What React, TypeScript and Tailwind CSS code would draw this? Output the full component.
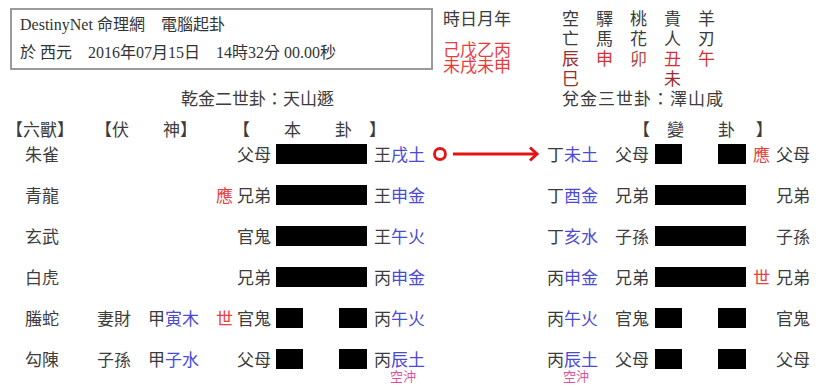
import React from "react";

// 六爻 chart: header box, shensha table, 本卦 / 變卦 rows

type Row = {
  beast: string;
  fuRel?: string;
  fuStem?: string;
  fuBranch?: string;
  mark?: string;
  rel: string;
  yang: boolean;
  stem: string;
  branch: string;
  kong?: boolean;
  moving?: boolean;
  bStem: string;
  bBranch: string;
  bKong?: boolean;
  bRel: string;
  bYang: boolean;
  bMark?: string;
  bRel2: string;
};

const ROWS: Row[] = [
  { beast: "朱雀", rel: "父母", yang: true, stem: "王", branch: "戌土", moving: true, bStem: "丁", bBranch: "未土", bRel: "父母", bYang: false, bMark: "應", bRel2: "父母" },
  { beast: "青龍", mark: "應", rel: "兄弟", yang: true, stem: "王", branch: "申金", bStem: "丁", bBranch: "酉金", bRel: "兄弟", bYang: true, bRel2: "兄弟" },
  { beast: "玄武", rel: "官鬼", yang: true, stem: "王", branch: "午火", bStem: "丁", bBranch: "亥水", bRel: "子孫", bYang: true, bRel2: "子孫" },
  { beast: "白虎", rel: "兄弟", yang: true, stem: "丙", branch: "申金", bStem: "丙", bBranch: "申金", bRel: "兄弟", bYang: true, bMark: "世", bRel2: "兄弟" },
  { beast: "螣蛇", fuRel: "妻財", fuStem: "甲", fuBranch: "寅木", mark: "世", rel: "官鬼", yang: false, stem: "丙", branch: "午火", bStem: "丙", bBranch: "午火", bRel: "官鬼", bYang: false, bRel2: "官鬼" },
  { beast: "勾陳", fuRel: "子孫", fuStem: "甲", fuBranch: "子水", rel: "父母", yang: false, stem: "丙", branch: "辰土", kong: true, bStem: "丙", bBranch: "辰土", bKong: true, bRel: "父母", bYang: false, bRel2: "父母" },
];

const SHENSHA: { text: string; color: string }[][] = [
  [
    { text: "空", color: "text-[#3c3c3c]" },
    { text: "驛", color: "text-[#3c3c3c]" },
    { text: "桃", color: "text-[#3c3c3c]" },
    { text: "貴", color: "text-[#3c3c3c]" },
    { text: "羊", color: "text-[#3c3c3c]" },
  ],
  [
    { text: "亡", color: "text-[#3c3c3c]" },
    { text: "馬", color: "text-[#3c3c3c]" },
    { text: "花", color: "text-[#3c3c3c]" },
    { text: "人", color: "text-[#3c3c3c]" },
    { text: "刃", color: "text-[#3c3c3c]" },
  ],
  [
    { text: "辰", color: "text-[#9a2e2e]" },
    { text: "申", color: "text-[#d23333]" },
    { text: "卯", color: "text-[#a84a4a]" },
    { text: "丑", color: "text-[#d23333]" },
    { text: "午", color: "text-[#d23333]" },
  ],
  [
    { text: "巳", color: "text-[#9a2e2e]" },
    { text: "", color: "" },
    { text: "", color: "" },
    { text: "未", color: "text-[#9a2e2e]" },
    { text: "", color: "" },
  ],
];

function Bar({ yang }: { yang: boolean }) {
  if (yang) return <div className="w-[91px] h-[20px] bg-black" />;
  return (
    <div className="w-[91px] h-[20px] flex justify-between">
      <div className="w-[27px] h-full bg-black" />
      <div className="w-[28px] h-full bg-black" />
    </div>
  );
}

function Najia({ stem, branch, kong }: { stem: string; branch: string; kong?: boolean }) {
  return (
    <div className="flex flex-col">
      <div className="h-[20px] leading-[20px]">
        {stem}
        <span className="text-[#4a4ad6]">{branch}</span>
      </div>
      {kong && (
        <div className="pl-[16px] h-[14px] leading-[14px] text-[13px] text-[#e0509a]">空沖</div>
      )}
    </div>
  );
}

function MoveArrow() {
  return (
    <svg width="114" height="20" viewBox="0 0 114 20">
      <circle cx="7" cy="10" r="5.5" fill="none" stroke="#e41414" strokeWidth="2.8" />
      <line x1="20" y1="10" x2="104" y2="10" stroke="#e41414" strokeWidth="3" />
      <polyline points="97,3.5 104,10 97,16.5" fill="none" stroke="#e41414" strokeWidth="3" />
    </svg>
  );
}

export default function App() {
  return (
    <div
      className="w-[833px] h-[388px] bg-white text-[#3c3c3c] text-[17px] overflow-hidden"
      style={{ fontFamily: '"Noto Sans CJK TC", "Noto Sans CJK SC", sans-serif' }}
    >
      {/* top: info box, pillars, shensha */}
      <div className="h-[88px] flex items-start">
        <div
          className="ml-[10px] mt-[8px] w-[423px] h-[62px] border-2 border-[#9a9a9a] pl-[8px] pt-[1px] text-[16px] text-[#333]"
          style={{ fontFamily: '"Liberation Serif", "Noto Sans CJK TC", serif' }}
        >
          <div className="h-[28px] leading-[28px] whitespace-pre">DestinyNet 命理網　電腦起卦</div>
          <div className="h-[28px] leading-[28px] whitespace-pre">於 西元　2016年07月15日　14時32分 00.00秒</div>
        </div>
        <div className="ml-[10px] pt-[8px] flex flex-col">
          <div className="h-[20px] leading-[20px]">時日月年</div>
          <div className="mt-[13px] h-[16px] leading-[16px] text-[#e83c3c]">己戊乙丙</div>
          <div className="h-[16px] leading-[16px] text-[#e83c3c]">未戌未申</div>
        </div>
        <div className="ml-[51px] pt-[8px] grid grid-cols-[34px_34px_34px_34px_34px]">
          {SHENSHA.flat().map((c, i) => (
            <div key={i} className={`h-[20px] leading-[20px] ${c.color}`}>
              {c.text}
            </div>
          ))}
        </div>
      </div>

      {/* gua titles */}
      <div className="h-[20px] leading-[20px] flex">
        <span className="ml-[181px]">乾金二世卦：天山遯</span>
        <span className="ml-[228px] tracking-[1px]">兌金三世卦：澤山咸</span>
      </div>

      {/* column headers */}
      <div className="mt-[12px] h-[18px] leading-[18px] flex whitespace-pre">
        <span className="ml-[6px]">【六獸】</span>
        <span className="ml-[21px]">【伏　　神】</span>
        <span className="ml-[36px]">【　　本　　卦　】</span>
        <span className="ml-[247px]">【　變　　卦　 】</span>
      </div>

      {/* yao rows, top line first */}
      {ROWS.map((r, i) => (
        <div key={i} className="h-[41px] pt-[6px] flex items-start leading-[20px]">
          <div className="w-[97px] pl-[25px] h-[20px]">{r.beast}</div>
          <div className="w-[51px] h-[20px]">{r.fuRel}</div>
          <div className="w-[68px] h-[20px]">
            {r.fuStem}
            <span className="text-[#4a4ad6]">{r.fuBranch}</span>
          </div>
          <div className="w-[21px] h-[20px] text-[#e84040]">{r.mark}</div>
          <div className="w-[39px] h-[20px]">{r.rel}</div>
          <Bar yang={r.yang} />
          <div className="w-[66px] pl-[7px]">
            <Najia stem={r.stem} branch={r.branch} kong={r.kong} />
          </div>
          <div className="w-[114px] h-[20px]">{r.moving && <MoveArrow />}</div>
          <div className="w-[68px]">
            <Najia stem={r.bStem} branch={r.bBranch} kong={r.bKong} />
          </div>
          <div className="w-[40px] h-[20px]">{r.bRel}</div>
          <Bar yang={r.bYang} />
          <div className="w-[30px] pl-[7px] h-[20px] text-[#e84040]">{r.bMark}</div>
          <div className="h-[20px]">{r.bRel2}</div>
        </div>
      ))}
    </div>
  );
}
